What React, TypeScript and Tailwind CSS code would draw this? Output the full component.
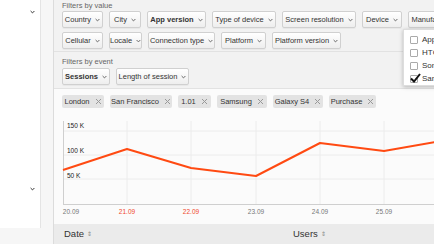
import React from 'react'

const font = { fontFamily: '"Liberation Sans", Arial, sans-serif' }

function Chevron({ className = 'text-[#666]' }: { className?: string }) {
  return (
    <svg width="5" height="4" viewBox="0 0 5 4" className={className}>
      <polyline points="0.6,1 2.5,2.9 4.4,1" fill="none" stroke="currentColor" strokeWidth="1" />
    </svg>
  )
}

function Btn({ label, bold, w }: { label: string; bold?: boolean; w: string }) {
  return (
    <div
      className={`${w} h-[17px] shrink-0 flex items-center justify-center gap-[4px] rounded-[2px] border border-[#d0d0d0] bg-gradient-to-b from-white to-[#eeeeee] shadow-[0_1px_0_rgba(0,0,0,0.04)] text-[7.5px] text-[#333] whitespace-nowrap ${bold ? 'font-bold' : ''}`}
    >
      <span>{label}</span>
      <Chevron />
    </div>
  )
}

function Tag({ label, w }: { label: string; w: string }) {
  return (
    <div className={`${w} h-[13px] shrink-0 flex items-center justify-center gap-[5px] rounded-[2px] bg-[#e3e3e3] text-[7.5px] text-[#333] whitespace-nowrap`}>
      <span>{label}</span>
      <svg width="7" height="7" viewBox="0 0 7 7" className="text-[#999]">
        <path d="M1 1L6 6M6 1L1 6" stroke="currentColor" strokeWidth="1" />
      </svg>
    </div>
  )
}

const points = [
  [9, 57], [73, 36], [137, 55], [202, 63], [266, 30], [330, 38], [381, 29],
]

function Chart() {
  const xs = [73, 137, 202, 266, 330]
  const labels = [
    { x: 17, t: '20.09', red: false },
    { x: 73, t: '21.09', red: true },
    { x: 137, t: '22.09', red: true },
    { x: 202, t: '23.09', red: false },
    { x: 266, t: '24.09', red: false },
    { x: 330, t: '25.09', red: false },
  ]
  return (
    <svg width="381" height="108" viewBox="0 0 381 108" className="block" style={font}>
      {xs.map(x => (
        <line key={x} x1={x} y1="8" x2={x} y2="91" stroke="#ececec" strokeWidth="1" />
      ))}
      {[18, 42, 66].map(y => (
        <line key={y} x1="9" y1={y} x2="381" y2={y} stroke="#ececec" strokeWidth="1" />
      ))}
      <line x1="9.5" y1="8" x2="9.5" y2="91" stroke="#cfcfcf" />
      <line x1="9" y1="91.5" x2="381" y2="91.5" stroke="#cfcfcf" />
      <text x="13" y="15" fontSize="6.5" fill="#222">150 K</text>
      <text x="13" y="40" fontSize="6.5" fill="#222">100 K</text>
      <text x="13" y="65" fontSize="6.5" fill="#222">50 K</text>
      <polyline
        points={points.map(p => p.join(',')).join(' ')}
        fill="none"
        stroke="#ff4a12"
        strokeWidth="2"
        strokeLinejoin="round"
      />
      {labels.map(l => (
        <text key={l.t} x={l.x} y="101" fontSize="6.5" textAnchor="middle" fill={l.red ? '#f0482c' : '#777'}>
          {l.t}
        </text>
      ))}
    </svg>
  )
}

export default function App() {
  return (
    <div className="relative w-[434px] h-[244px] overflow-hidden bg-[#f6f6f6] flex" style={font}>
      {/* sidebar */}
      <div className="w-[41px] h-[228px] shrink-0 bg-white border-r border-[#e4e4e4] flex flex-col items-end pr-[5px]">
        <div className="mt-[10px]">
          <Chevron className="text-[#333]" />
        </div>
        <div className="mt-[173px]">
          <Chevron className="text-[#333]" />
        </div>
      </div>

      <div className="w-[12px] shrink-0" />

      {/* main */}
      <div className="flex-1 min-w-0 flex flex-col border-l border-[#dcdcdc] bg-[#fbfbfb]">
        <div className="bg-[#f2f2f2] pl-[8px] border-b border-[#e2e2e2]">
          <div className="h-[11px] pt-[1px] text-[7.5px] text-[#666] leading-[10px]">Filters by value</div>
          <div className="flex gap-[6px] h-[17px]">
            <Btn label="Country" w="w-[41px]" />
            <Btn label="City" w="w-[32px]" />
            <Btn label="App version" bold w="w-[59px]" />
            <Btn label="Type of device" w="w-[64px]" />
            <Btn label="Screen resolution" w="w-[74px]" />
            <Btn label="Device" w="w-[40px]" />
            <Btn label="Manufacturer" w="w-[60px]" />
          </div>
          <div className="flex gap-[6px] h-[17px] mt-[4px]">
            <Btn label="Cellular" w="w-[41px]" />
            <Btn label="Locale" w="w-[33px]" />
            <Btn label="Connection type" w="w-[67px]" />
            <Btn label="Platform" w="w-[45px]" />
            <Btn label="Platform version" w="w-[69px]" />
          </div>
          <div className="h-[2px] mt-[1px] -ml-[8px] border-b border-[#e2e2e2]" />
          <div className="h-[15px] pt-[5px] text-[7.5px] text-[#666] leading-[10px]">Filters by event</div>
          <div className="flex gap-[6px] h-[17px] mt-[1px]">
            <Btn label="Sessions" bold w="w-[48px]" />
            <Btn label="Length of session" w="w-[73px]" />
          </div>
          <div className="h-[3px]" />
        </div>

        <div className="flex gap-[6px] pl-[8px] pt-[6px]">
          <Tag label="London" w="w-[42px]" />
          <Tag label="San Francisco" w="w-[62px]" />
          <Tag label="1.01" w="w-[33px]" />
          <Tag label="Samsung" w="w-[50px]" />
          <Tag label="Galaxy S4" w="w-[50px]" />
          <Tag label="Purchase" w="w-[47px]" />
        </div>

        <div className="mt-[5px]">
          <Chart />
        </div>

        <div className="mt-[3px] flex-1 bg-[#ebebeb] flex items-center text-[9.5px] text-[#333]">
          <div className="w-[239px] pl-[10px] flex items-center gap-[3px]">
            Date <span className="text-[6px] text-[#888]">⇕</span>
          </div>
          <div className="flex items-center gap-[3px]">
            Users <span className="text-[6px] text-[#888]">⇕</span>
          </div>
        </div>
      </div>

      {/* manufacturer dropdown */}
      <div className="absolute left-[403px] top-[29px] w-[60px] h-[57px] bg-white shadow-[0_1px_4px_rgba(0,0,0,0.25)] border border-[#ddd] flex flex-col gap-[4px] pt-[5px] pl-[6px] text-[8px] text-[#333]">
        {['Apple', 'HTC', 'Sony', 'Samsung'].map((m, i) => (
          <div key={m} className="flex items-center gap-[4px] h-[9px]">
            <div className="relative w-[8px] h-[8px] rounded-[1px] border border-[#aaa] bg-white">
              {i === 3 && (
                <svg width="11" height="10" viewBox="0 0 11 10" className="absolute -left-[1px] -top-[3px]">
                  <path d="M1 5.5L4 8.5L10 1" fill="none" stroke="#111" strokeWidth="2" />
                </svg>
              )}
            </div>
            <span>{m}</span>
          </div>
        ))}
      </div>
    </div>
  )
}
